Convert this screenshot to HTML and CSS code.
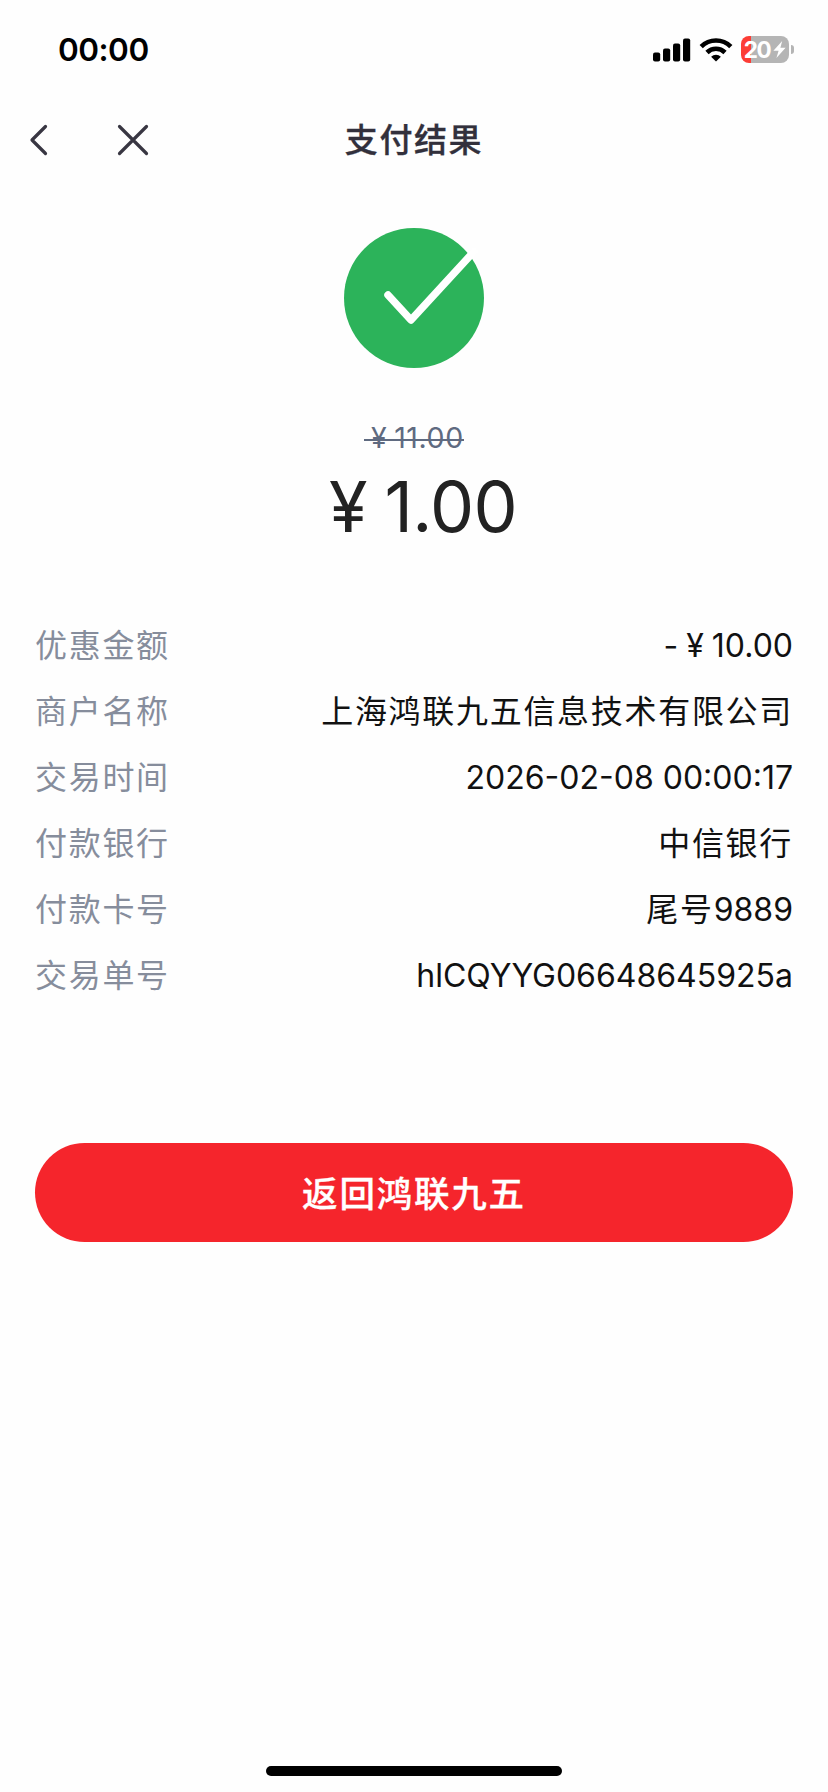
FILE: index.html
```html
<!DOCTYPE html>
<html lang="zh-CN">
<head>
  <meta charset="UTF-8" />
  <meta name="viewport" content="width=device-width, initial-scale=1.0" />
  <title>支付结果</title>
  <link rel="stylesheet" href="styles.css">
</head>
<body>
  <div class="status-bar">
    <span class="time">00:00</span>
    <div class="status-icons">
      <svg width="38" height="24" viewBox="0 0 38 24">
        <rect x="0" y="14.5" width="7.2" height="9" rx="2" />
        <rect x="10" y="10.5" width="7.2" height="13" rx="2" />
        <rect x="20" y="5.5" width="7.2" height="18" rx="2" />
        <rect x="30" y="0.5" width="7.2" height="23" rx="2" />
      </svg>
      <svg class="wifi" width="34" height="24" viewBox="0 0 34 24">
        <path d="M2.2 8.6a21 21 0 0 1 29.6 0M8 14.5a12.8 12.8 0 0 1 18 0" fill="none" stroke="#000" stroke-width="4.6" />
        <path d="M17 23.6l-4.9-4.9a7 7 0 0 1 9.8 0z" />
      </svg>
      <div class="battery">
        <span>20</span>
        <svg width="13" height="17" viewBox="0 0 13 17"><path d="M9.2 0L0.4 9.8h5.2L3.4 17l9.2-10.2H7.4z" fill="#fff" /></svg>
      </div>
      <i class="battery-tip"></i>
    </div>
  </div>

  <header class="nav">
    <div class="nav-buttons">
      <svg width="20" height="34" viewBox="0 0 20 34"><path d="M17.5 3.500L4 17l13.500 13.500" /></svg>
      <svg width="34" height="34" viewBox="0 0 34 34"><path d="M3.500 3.500l27 27M30.500 3.500L3.500 30.500" /></svg>
    </div>
    <h1>支付结果</h1>
  </header>

  <main>
    <div class="result">
      <svg width="140" height="140" viewBox="0 0 140 140">
        <circle cx="70" cy="70" r="70" fill="#2cb35a" />
        <path d="M44 67l23 25L130 23.500" fill="none" stroke="#fff" stroke-width="7.500" stroke-linecap="round" stroke-linejoin="round" />
      </svg>
      <p class="old-price"><span class="yen">¥</span>11.00</p>
      <p class="price"><span class="yen">¥</span>1.00</p>
    </div>

    <dl class="details">
      <div class="row"><dt>优惠金额</dt><dd>-<span class="yen">¥</span>10.00</dd></div>
      <div class="row"><dt>商户名称</dt><dd class="cn">上海鸿联九五信息技术有限公司</dd></div>
      <div class="row"><dt>交易时间</dt><dd>2026-02-08 00:00:17</dd></div>
      <div class="row"><dt>付款银行</dt><dd class="cn">中信银行</dd></div>
      <div class="row"><dt>付款卡号</dt><dd><span class="cn">尾号</span>9889</dd></div>
      <div class="row"><dt>交易单号</dt><dd>hlCQYYG06648645925a</dd></div>
    </dl>

    <button class="back-btn">返回鸿联九五</button>
  </main>

  <div class="home-indicator"></div>
</body>
</html>
```
FILE: styles.css
```css
* {
  box-sizing: border-box;
}
body {
  font-family: Inter, "Noto Sans CJK SC", sans-serif;
  background: #fefefe;
  color: #111;
  margin: 0;
  height: 1792px;
  display: flex;
  flex-direction: column;
}
.status-bar {
  height: 96px;
  padding: 3px 34px 0 58px;
  display: flex;
  align-items: center;
  justify-content: space-between;
}
.time {
  font-size: 31.5px;
  font-weight: 600;
  letter-spacing: -0.5px;
  color: #000;
}
.status-icons {
  display: flex;
  align-items: center;
}
.wifi {
  margin: 0 8px;
}
.battery {
  width: 48px;
  height: 27px;
  border-radius: 8px;
  background: linear-gradient(to right, #fc3d36 10px, #b5b5b5 10px);
  display: flex;
  align-items: center;
  justify-content: center;
  color: #fff;
  font-size: 22.5px;
  font-weight: 700;
  letter-spacing: -1.5px;
}
.battery svg {
  margin-left: 3px;
}
.battery-tip {
  width: 3px;
  height: 9px;
  margin-left: 2px;
  border-radius: 0 4px 4px 0;
  background: #b5b5b5;
}
.nav {
  height: 88px;
  padding: 0 28px;
  display: grid;
  grid-template-columns: 1fr auto 1fr;
  align-items: center;
}
.nav-buttons {
  display: flex;
  gap: 68px;
}
.nav svg {
  fill: none;
  stroke: #383642;
  stroke-width: 3.2;
  stroke-linecap: round;
  stroke-linejoin: round;
}
.nav h1 {
  margin: 0;
  font-size: 33px;
  font-weight: 500;
  letter-spacing: 1.6px;
  line-height: 48px;
  color: #32303c;
  -webkit-text-stroke: 0.3px;
}
main {
  padding: 44px 35px 0;
}
.result {
  display: flex;
  flex-direction: column;
  align-items: center;
}
/* the currency sign takes a full-width cell */
.yen {
  display: inline-block;
  width: 1.05em;
  text-align: center;
}
.old-price {
  position: relative;
  margin: 49px 0 0;
  font-size: 28.5px;
  line-height: 42px;
  letter-spacing: 0.6px;
  color: #5f6a80;
}
.old-price::after {
  content: "";
  position: absolute;
  left: 0;
  right: 0;
  top: 22px;
  height: 2px;
  background: #5f6a80;
}
.price {
  margin: 18px 0 0;
  font-size: 70px;
  line-height: 60px;
  letter-spacing: -0.7px;
  color: #222;
}
.details {
  margin: 76px 0 0;
}
.row {
  height: 66px;
  display: flex;
  align-items: baseline;
  justify-content: space-between;
  font-size: 32px;
  line-height: 66px;
}
.row dt {
  color: #868d9c;
  letter-spacing: 1.7px;
}
.row dd {
  margin: 0;
}
.cn {
  letter-spacing: 1.7px;
}
.back-btn {
  width: 100%;
  height: 99px;
  margin-top: 134px;
  padding: 0 0 3px;
  border: none;
  border-radius: 50px;
  background: #f5252c;
  color: #fff;
  font-family: inherit;
  font-size: 35.5px;
  font-weight: 500;
  letter-spacing: 1.8px;
  -webkit-text-stroke: 0.3px;
  cursor: pointer;
}
.home-indicator {
  width: 296px;
  height: 10px;
  margin: auto auto 16px;
  border-radius: 5px;
  background: #000;
}
```
